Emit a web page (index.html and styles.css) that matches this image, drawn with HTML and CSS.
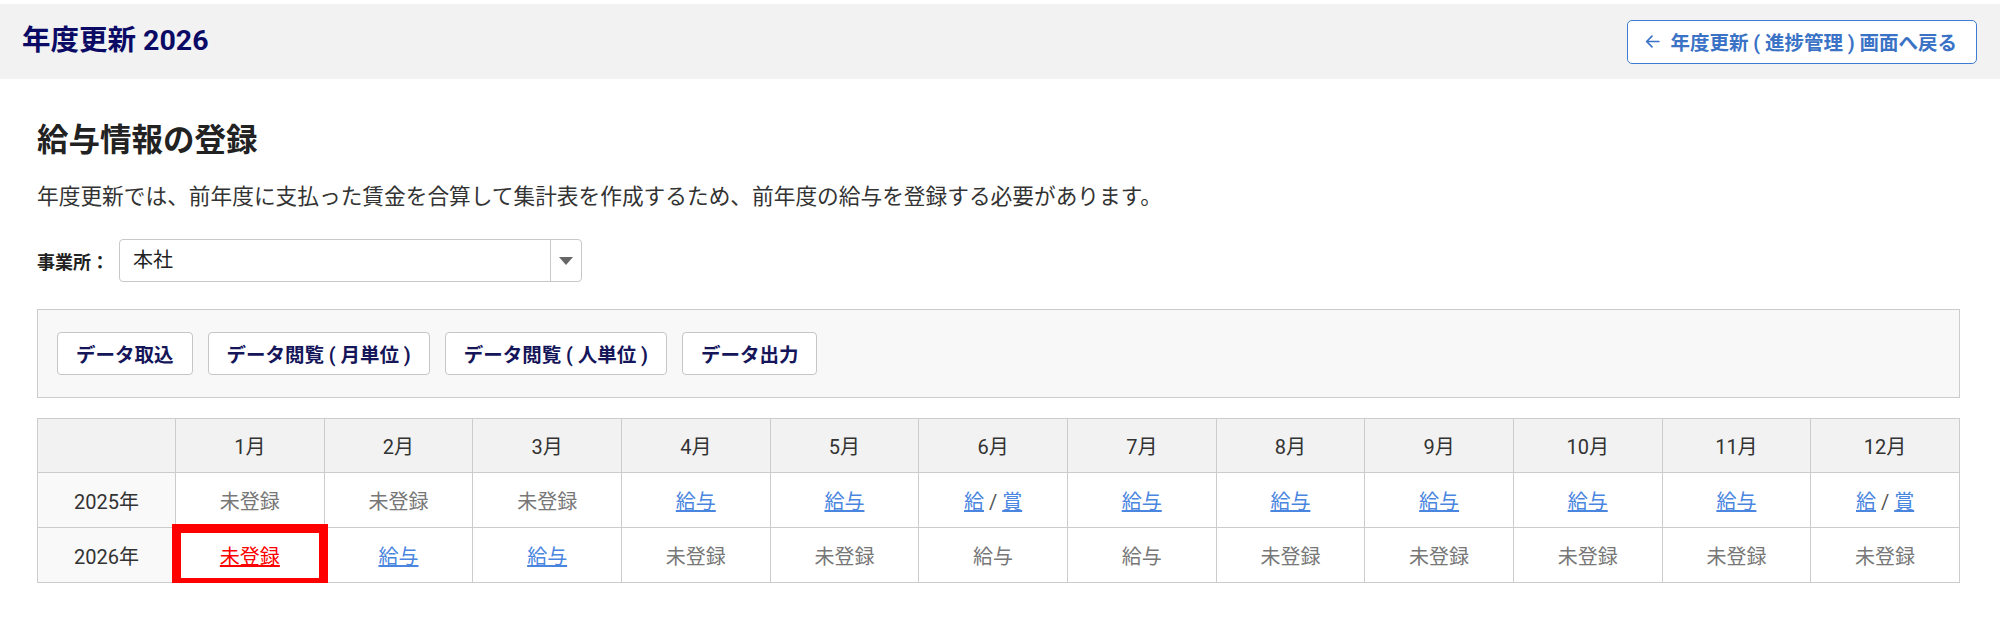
FILE: index.html
```html
<!DOCTYPE html>
<html lang="ja">
<head>
  <meta charset="UTF-8" />
  <title>年度更新 2026</title>
  <link rel="stylesheet" href="styles.css">
</head>
<body>
  <div class="header">
    <h1>年度更新 2026</h1>
    <a class="back-btn" href="#"><svg class="back-icon" viewBox="0 0 16 16" width="16" height="16"><path d="M14 8H2.5M7.5 3L2.5 8l5 5" fill="none" stroke="currentColor" stroke-width="1.6" stroke-linecap="round" stroke-linejoin="round"/></svg><span>年度更新 ( 進捗管理 ) 画面へ戻る</span></a>
  </div>

  <div class="main">
    <h2>給与情報の登録</h2>
    <p class="desc">年度更新では、前年度に支払った賃金を合算して集計表を作成するため、前年度の給与を登録する必要があります。</p>

    <div class="office-row">
      <label>事業所：</label>
      <div class="select-box">
        <span class="select-value">本社</span>
        <span class="select-arrow"><i></i></span>
      </div>
    </div>

    <div class="toolbar">
      <button class="tool-btn">データ取込</button>
      <button class="tool-btn">データ閲覧 ( 月単位 )</button>
      <button class="tool-btn">データ閲覧 ( 人単位 )</button>
      <button class="tool-btn">データ出力</button>
    </div>

    <table class="pay-table">
      <thead>
        <tr>
          <th class="year-col"></th>
          <th>1月</th><th>2月</th><th>3月</th><th>4月</th><th>5月</th><th>6月</th>
          <th>7月</th><th>8月</th><th>9月</th><th>10月</th><th>11月</th><th>12月</th>
        </tr>
      </thead>
      <tbody>
        <tr>
          <td class="year-col">2025年</td>
          <td class="none">未登録</td>
          <td class="none">未登録</td>
          <td class="none">未登録</td>
          <td><a href="#">給与</a></td>
          <td><a href="#">給与</a></td>
          <td><a href="#">給</a> / <a href="#">賞</a></td>
          <td><a href="#">給与</a></td>
          <td><a href="#">給与</a></td>
          <td><a href="#">給与</a></td>
          <td><a href="#">給与</a></td>
          <td><a href="#">給与</a></td>
          <td><a href="#">給</a> / <a href="#">賞</a></td>
        </tr>
        <tr>
          <td class="year-col">2026年</td>
          <td class="marked"><a class="alert" href="#">未登録</a></td>
          <td><a href="#">給与</a></td>
          <td><a href="#">給与</a></td>
          <td class="none">未登録</td>
          <td class="none">未登録</td>
          <td class="none">給与</td>
          <td class="none">給与</td>
          <td class="none">未登録</td>
          <td class="none">未登録</td>
          <td class="none">未登録</td>
          <td class="none">未登録</td>
          <td class="none">未登録</td>
        </tr>
      </tbody>
    </table>
  </div>
</body>
</html>
```

FILE: styles.css
```css
* { box-sizing: border-box; margin: 0; padding: 0; }
body {
  font-family: Roboto, "Noto Sans CJK JP", sans-serif;
  background: #ffffff;
  color: #333333;
  padding-top: 4px;
}

.header {
  height: 75px;
  background: #f2f2f2;
  display: flex;
  align-items: center;
  justify-content: space-between;
  padding: 0 23px 0 22px;
}
.header h1 {
  font-size: 28.5px;
  line-height: 1;
  font-weight: bold;
  color: #0b0b66;
}
.back-btn {
  display: flex;
  align-items: center;
  gap: 9px;
  height: 44px;
  padding: 0 19px 0 16px;
  background: #fff;
  border: 1px solid #3f7bd0;
  border-radius: 5px;
  color: #3a72c6;
  font-size: 19.5px;
  font-weight: bold;
  text-decoration: none;
}
.back-btn span { white-space: pre; }
.back-icon { width: 17px; height: 17px; }

.main {
  padding: 0 40px 0 37px;
}
.main h2 {
  margin-top: 44px;
  font-size: 31.5px;
  line-height: 36px;
  font-weight: bold;
  color: #222;
}
.desc {
  margin-top: 24px;
  font-size: 21.7px;
  line-height: 28px;
  color: #333;
}

.office-row {
  display: flex;
  align-items: center;
  margin-top: 28px;
  gap: 6px;
}
.office-row label {
  font-size: 18px;
  font-weight: bold;
  color: #222;
  width: 76px;
}
.select-box {
  width: 463px;
  height: 43px;
  display: flex;
  border: 1px solid #c8c8c8;
  border-radius: 4px;
  background: #fff;
}
.select-value {
  flex: 1;
  font-size: 20px;
  line-height: 41px;
  padding-left: 13px;
  color: #222;
}
.select-arrow {
  width: 31px;
  border-left: 1px solid #c8c8c8;
  display: flex;
  align-items: center;
  justify-content: center;
}
.select-arrow i {
  display: block;
  border-left: 7px solid transparent;
  border-right: 7px solid transparent;
  border-top: 8px solid #666;
}

.toolbar {
  margin-top: 27px;
  background: #f8f8f8;
  border: 1px solid #cccccc;
  padding: 22px 19px;
  display: flex;
  gap: 15px;
}
.tool-btn {
  height: 43px;
  padding: 0 18px;
  background: #fff;
  border: 1px solid #c6c6c6;
  border-radius: 4px;
  font-family: Roboto, "Noto Sans CJK JP", sans-serif;
  font-size: 19.5px;
  font-weight: bold;
  color: #15155a;
  white-space: pre;
}

.pay-table {
  margin-top: 20px;
  width: 100%;
  border-collapse: collapse;
  table-layout: fixed;
  font-size: 20px;
}
.pay-table th, .pay-table td {
  border: 1px solid #cccccc;
  text-align: center;
  font-weight: normal;
}
.pay-table th {
  height: 54px;
  background: #f2f2f2;
  color: #333;
}
.pay-table td {
  height: 55px;
  color: #555;
}
.pay-table th.year-col { width: 138px; }
.pay-table td.year-col { background: #f9f9f9; color: #333; }
.pay-table td.none { color: #777; }
.pay-table a { color: #4a86e0; }
.pay-table a.alert { color: #ff0000; }
.pay-table td.marked {
  outline: 9px solid #ff0000;
  outline-offset: -5px;
}
```
